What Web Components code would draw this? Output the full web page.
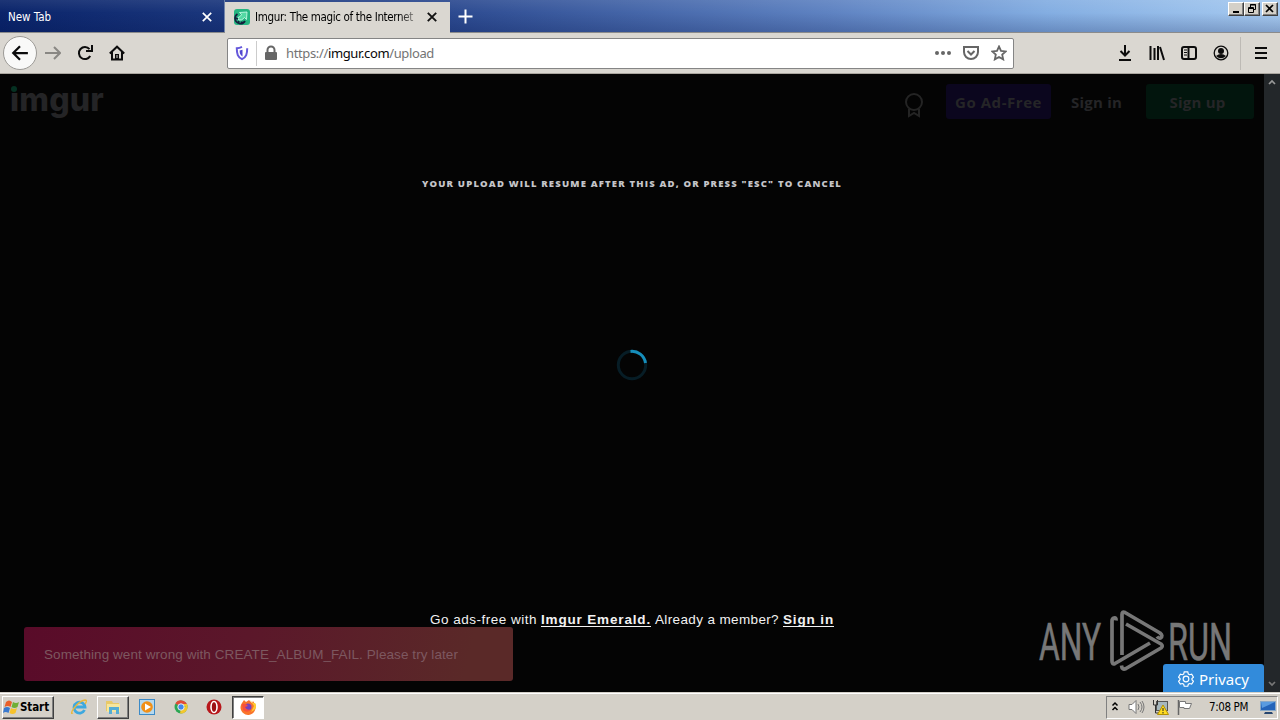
<!DOCTYPE html>
<html lang="en"><head><meta charset="utf-8"><title>Imgur: The magic of the Internet</title>
<style>html,body{margin:0;height:100%;overflow:hidden;background:#000}</style></head>
<body><desktop-screen></desktop-screen>
<script>
const define=(name,html,init)=>customElements.define(name,class extends HTMLElement{
 connectedCallback(){ if(this.shadowRoot)return;
  const t=document.createElement('template');t.innerHTML=html;
  this.attachShadow({mode:'open'}).append(t.content.cloneNode(true)); if(init)init(this,this.shadowRoot);
 }});

/* one line of text spread over a given width */
define('fit-text',`<style>:host{display:inline-block;white-space:pre;flex:none}span{display:inline-block}</style><span><slot></slot></span>`,(el,r)=>{
 const s=r.querySelector('span'),w=+el.getAttribute('w');el.style.width=w+'px';
 const n=el.textContent.length;s.style.letterSpacing=((w-s.getBoundingClientRect().width)/n)+'px';});

define('tab-strip',`<style>
:host{display:flex;box-sizing:border-box;height:33px;border-bottom:1px solid #8b8b8b;font:11.5px "DejaVu Sans Condensed","DejaVu Sans",sans-serif;
background:linear-gradient(180deg,rgba(255,255,255,.08),rgba(0,0,0,0) 40%,rgba(0,15,70,.22)),linear-gradient(90deg,#0a246a,#2c4a90 35%,#5f83c2 65%,#84aee2 82%,#a6caf0)}
.tab{display:flex;align-items:center;box-sizing:border-box;height:32px;color:#fff}
.a{width:225px;padding:1px 12px 0 8px;justify-content:space-between;border-right:1px solid #7184aa}
.b{width:225px;height:32px;margin:2px 0 -1px;padding:0 13px 2px 9px;background:#dad7d1;color:#000}
.b svg:first-child{margin-right:5px}.b .t{flex:1;-webkit-mask:linear-gradient(90deg,#000 145px,#0005 159px)}
.plus{margin:9px 0 0 8px}.wins{margin:2px 2px 0 auto;display:flex;height:14px}
.w{box-sizing:border-box;width:16px;height:14px;background:#d4d0c8;border:1px solid;border-color:#fff #404040 #404040 #fff;box-shadow:inset -1px -1px #808080}.w:last-child{margin-left:2px}.w svg{display:block}
</style><div class="tab a"><fit-text w="43">New Tab</fit-text><svg width="10" height="10"><path d="M.8.8 9.2 9.2M9.2.8.8 9.2" stroke="#fff" stroke-width="1.7"/></svg></div>
<div class="tab b"><svg width="16" height="16"><rect width="16" height="16" rx="3" fill="#25b581"/><path d="M5.500 3.500 13 3 12.500 10.500 10.500 8.500Q8 12 4.500 11L4 8.500Q6.500 8 7.500 5.500Z" fill="#54d9a4" stroke="#d2ffed" stroke-width=".8"/><path d="M3.500 5Q1 6.500 1 9.500q.5 4 4.500 5 4 .5 5.500-2.500M1.500 9l2.500 1M4 14l1-2M8 14.500 7.500 12.500" fill="none" stroke="#14203e" stroke-width="1.800"/></svg><span class="t"><fit-text w="158">Imgur: The magic of the Internet</fit-text></span><svg width="10" height="10"><path d="M.8.8 9.2 9.2M9.2.8.8 9.2" stroke="#111" stroke-width="1.9"/></svg></div>
<svg class="plus" width="15" height="15"><path d="M7.5 0.5v14M.5 7.5h14" stroke="#fff" stroke-width="2"/></svg>
<div class="wins"><div class="w"><svg width="14" height="12"><path d="M4 9h6" stroke="#000" stroke-width="2"/></svg></div><div class="w"><svg width="14" height="12" fill="none" stroke="#000"><path d="M5.5 4V1.5h5v5H9M5 2h6"/><path d="M3.5 4.5h5v5h-5zM3 5.5h6"/></svg></div><div class="w"><svg width="14" height="12"><path d="m3 2 7 7M10 2 3 9" stroke="#000" stroke-width="1.7"/></svg></div></div>`);

define('nav-bar',`<style>
:host{display:flex;align-items:center;box-sizing:border-box;height:41px;background:#dad7d1;border-bottom:1px solid #aaa69f;padding:0 11px 0 3px}
svg{display:block;flex:none;fill:none;stroke:#0c0c0c;stroke-width:2}
.back{box-sizing:border-box;width:34px;height:34px;border:1px solid #9c9a96;border-radius:50%;background:#f9f9f8;display:grid;place-items:center;margin-right:8px}
.url{box-sizing:border-box;display:flex;align-items:center;width:787px;height:31px;border:1px solid #858585;border-radius:2px;background:#fff;margin-left:102px;padding:0 6px;font:13px "Noto Sans",sans-serif;color:#747474}
.url b{font-weight:400;color:#080808}.sep{width:1px;height:25px;background:#ccc;margin:0 6px 0 6px}.g{stroke:#666}
.right{display:flex;align-items:center;margin-left:auto;gap:16px}.bar{width:1px;height:33px;background:#bdbab5;margin:0 -4px 0 -5px}
</style><div class="back"><svg width="18" height="18" viewBox="0 0 16 16"><path d="M15 8H2M8 2 2 8l6 6"/></svg></div>
<svg width="16" height="16" style="stroke:#898783"><path d="M0 8h14M9 2l6 6-6 6"/></svg>
<svg width="16" height="16" style="margin-left:16px"><path d="M13.2 11A6 6 0 1 1 12.5 4.2M15 0v6H9"/></svg>
<svg width="16" height="16" style="margin-left:16px"><path d="M0.8 8.5 8 1.7l7.2 6.8M3 7v7.5h10V7"/><path d="M6 14V9h4v5z" fill="#0c0c0c" stroke="none"/><path d="M8 10v3" stroke="#dad7d1" stroke-width="1"/></svg>
<div class="url"><svg width="16" height="16"><path d="M8 1.800Q5.500 3 2.800 3.200C2.800 9 3.700 12 8 14.200 12.300 12 13.200 9 13.200 3.200 10.500 3 8 1.800Z" stroke="#6558db"/><path d="M8.500 4.800v6.700Q5.600 10 5.600 5.500Z" fill="#5348d0" stroke="none"/></svg><span class="sep"></span>
<svg width="16" height="16" class="g"><path d="M4.500 8V5a3.500 3.500 0 0 1 7 0v3"/><rect x="2" y="7" width="12" height="8" rx="1" fill="#666" stroke="none"/></svg>
<fit-text w="148" style="margin-left:7px">https://<b>imgur.com</b>/upload</fit-text>
<svg width="16" height="16" style="margin-left:auto"><g fill="#666" stroke="none"><circle cx="2" cy="8" r="2"/><circle cx="8" cy="8" r="2"/><circle cx="14" cy="8" r="2"/></g></svg>
<svg class="g" width="16" height="16" style="margin:0 12px"><path d="M1 2h14v5A7 7 0 0 1 1 7Z"/><path d="m4.500 6 3.500 3.500L11.500 6"/></svg>
<svg class="g" width="16" height="16"><path d="m8 1.500 2 4.300 4.700.6-3.500 3.200 1 4.800L8 12l-4.200 2.400 1-4.800L1.300 6.400 6 5.800Z" stroke-width="1.8"/></svg></div>
<div class="right"><svg width="16" height="16"><path d="M8 0v10M3.500 6 8 10.500 12.500 6M2 15h12"/></svg>
<svg width="16" height="16"><path d="M1.500 1v14M5.500 3v12M9 1v14M11 2l4 13"/></svg>
<svg width="16" height="16"><rect x="1" y="2" width="14" height="12" rx="2"/><path d="M7.500 2v12"/><path d="M3 5h3M3 7.500h3M3 10h3" stroke-width="1"/></svg>
<svg width="16" height="16"><circle cx="8" cy="8" r="6.800" stroke-width="1.300"/><circle cx="8" cy="6" r="3" fill="#0c0c0c" stroke="none"/><path d="M3 11Q8 7 13 11 8 15.500 3 11Z" fill="#0c0c0c" stroke="none"/></svg>
<span class="bar"></span><svg width="16" height="16"><path d="M2 3h12M2 8h12M2 13h12"/></svg></div>`);

define('imgur-header',`<style>
:host{display:flex;align-items:flex-start;box-sizing:border-box;height:60px;padding:10px 10px 0;font:700 15px "Open Sans",sans-serif;color:#252527}
.logo{position:relative;width:94px;height:40px;font:800 32px/32px Inter,sans-serif;color:#242426}.logo i{position:absolute;left:0;top:1px;width:9px;height:8px;background:#04150f}
.logo i::after{content:"";position:absolute;left:1px;top:1px;width:6px;height:6px;border-radius:3px;background:#053122}.logo i{background:#040404}
svg{margin:8px 22px 0 auto;fill:none;stroke:#242424;stroke-width:2}
.btn{box-sizing:border-box;display:flex;justify-content:center;height:35px;line-height:36px;border-radius:3px}
</style><div class="logo"><fit-text w="94">imgur</fit-text><i></i></div>
<svg width="20" height="26"><circle cx="10" cy="10" r="8"/><path d="M5 17v7l5-3 5 3v-7"/></svg>
<div class="btn" style="width:105px;background:#0b061e"><fit-text w="87">Go Ad-Free</fit-text></div>
<div class="btn" style="width:95px;padding-right:4px"><fit-text w="51">Sign in</fit-text></div>
<div class="btn" style="width:108px;background:#02150d;padding-right:5px"><fit-text w="56">Sign up</fit-text></div>`);

define('any-run',`<style>:host{position:absolute;left:1035px;top:532px}svg{display:block;overflow:visible}</style>
<svg width="210" height="70" viewBox="1035 606 210 70"><g fill="#777" stroke="#777" stroke-width=".6" font-family="Roboto,sans-serif" font-size="51.5"><text x="1039" y="660" textLength="62" lengthAdjust="spacingAndGlyphs">ANY</text><text x="1168" y="660" textLength="64" lengthAdjust="spacingAndGlyphs">RUN</text></g>
<g fill="none" stroke="#777" stroke-width="3.700" stroke-linejoin="round"><path d="M1116 620.500Q1116.500 617.500 1114 618 1112 618.500 1112 621V661Q1112 665 1115 663.500L1150 643"/><path d="M1122 655V614.500Q1122 611 1125 612.500L1160 633Q1163.500 636 1160.500 638 1158.500 638.500 1157 636.500"/><path d="M1126 624 1161 644Q1163.500 646 1161 648L1126 668.500Q1122 670.500 1121.500 665.500"/></g></svg>`);

define('imgur-page',`<style>
:host{position:relative;display:flex;height:618px;background:#040404}
main{width:1264px;display:flex;flex-direction:column;align-items:center}imgur-header{align-self:stretch}
.msg{margin-top:42px;height:16px;font:900 9.500px/16px "Open Sans",sans-serif;color:#c5c5c9}
.spin{margin-top:157px;height:32px}.spin svg{display:block}
.ads{margin-top:229px;font:13.500px/20px "Liberation Sans",sans-serif;color:#f2f2f2;display:flex;gap:4px}
.ads b{border-bottom:1px solid #f2f2f2;height:16px}
aside{width:16px;background:#23272a;display:flex;flex-direction:column;justify-content:space-between;align-items:center;padding:5px 0;box-sizing:border-box}
.toast{position:absolute;left:24px;top:553px;width:489px;height:54px;box-sizing:border-box;padding:0 20px;border-radius:3px;background:linear-gradient(105deg,#590b29,#5b172a 45%,#5a2928 90%);font:13.500px/56px "Liberation Sans",sans-serif;color:#7d5860}
.privacy{position:absolute;left:1163px;top:590px;width:101px;height:28px;box-sizing:border-box;padding:1px 15px 0;display:flex;align-items:center;gap:5px;border-radius:3px 3px 0 0;background:#328bdb;color:#fff;font:15px "Noto Sans",sans-serif}
</style><main><imgur-header></imgur-header>
<div class="msg"><fit-text w="420">YOUR UPLOAD WILL RESUME AFTER THIS AD, OR PRESS "ESC" TO CANCEL</fit-text></div>
<div class="spin"><svg width="32" height="32" fill="none" stroke-width="3"><circle cx="16" cy="16" r="13.700" stroke="#071d26"/><path d="M14.500 2.400A13.700 13.700 0 0 1 29.500 14" stroke="#168ebb"/></svg></div>
<div class="ads"><fit-text w="107">Go ads-free with</fit-text><b><fit-text w="110">Imgur Emerald.</fit-text></b><fit-text w="124">Already a member?</fit-text><b><fit-text w="51">Sign in</fit-text></b></div></main>
<aside><svg width="8" height="6"><path d="m1 5 3-3 3 3" fill="none" stroke="#999" stroke-width="1.700"/></svg><svg width="8" height="6"><path d="m1 1 3 3 3-3" fill="none" stroke="#777" stroke-width="1.700"/></svg></aside>
<div class="toast"><fit-text w="414">Something went wrong with CREATE_ALBUM_FAIL. Please try later</fit-text></div><any-run></any-run>
<div class="privacy"><svg width="17" height="18" viewBox="0 0 18 18" fill="none" stroke="#fff" stroke-width="1.300"><path d="M7 1h4l.6 2.400 1.500.8 2.300-.7 2 3.400L15.700 8.500v1.300l1.700 1.700-2 3.300-2.300-.7-1.500.8L11 17.200H7l-.6-2.300-1.500-.8-2.300.7-2-3.300 1.700-1.700V8.500L.6 6.900l2-3.400 2.300.7 1.500-.8Z"/><circle cx="9" cy="9" r="3.200"/></svg><fit-text w="50">Privacy</fit-text></div>`);

define('task-bar',`<style>
:host{display:flex;align-items:center;box-sizing:border-box;height:28px;border-top:1px solid #d4d0c8;box-shadow:inset 0 1px #fff;background:#d4d0c8;padding:1px 2px 0;font:11.500px "DejaVu Sans Condensed","DejaVu Sans",sans-serif;color:#000}
svg{display:block;flex:none}.box{box-sizing:border-box;height:23px;display:flex;align-items:center;border:1px solid;border-color:#fff #404040 #404040 #fff;box-shadow:inset -1px -1px #808080}
.start{width:52px;font-weight:700;padding-left:0;gap:0;margin-right:17px}
.i{width:32px;justify-content:center}.on{background:#fff;border-color:#404040 #fff #fff #404040;box-shadow:inset 1px 1px #808080}
.tray{box-sizing:border-box;display:flex;align-items:center;width:172px;height:23px;margin-left:auto;border:1px solid;border-color:#808080 #fff #fff #808080;padding:0 1px 0 4px}
</style><div class="box start"><svg width="17" height="17"><path d="M3 3Q6 0 9 3L7.500 8Q5 6 1.500 8Z" fill="#e9602b"/><path d="M10 3q3 2 6 0l-1.500 5q-3 2-6 0Z" fill="#70af35"/><path d="M1 9q3-2 6 0l-1.500 5q-3-2-5.500 0Z" fill="#3979cf"/><path d="M8 9q3 2 6 0l-1.500 5q-3 2-6 0Z" fill="#f7c22b"/></svg><fit-text w="29">Start</fit-text></div>
<svg width="16" height="16" fill="none"><path d="M13.500 11a5.500 5.500 0 1 1 .5-3H4" stroke="#3da8df" stroke-width="2.800"/><path d="M2 14C-3 17 6 2 14 1q3 0 0 4" stroke="#eab83c" stroke-width="1.300"/></svg>
<div class="box i" style="margin:0 10px 0 10px"><svg width="16" height="16"><path d="M1 2h6l1 2h6v8H1Z" fill="#e8c968"/><path d="M2 5h13v8H2Z" fill="#f6e69d"/><path d="M4 15V8h10v7h-3v-4H7v4Z" fill="#55add5"/></svg></div>
<svg width="16" height="16"><rect x=".5" y=".5" width="15" height="15" fill="#b5d8ee" stroke="#3b8ac7"/><circle cx="8" cy="8" r="5.800" fill="#f19018"/><path d="M6 4.500 12 8l-6 3.500Z" fill="#fff"/></svg>
<svg width="16" height="16" style="margin-left:18px"><circle cx="8" cy="8" r="6.500" fill="#2ca653"/><path d="M8 8 2.400 4.500A6.500 6.500 0 0 1 14.200 6Z" fill="#e24a38"/><path d="M8 8h6.500A6.500 6.500 0 0 1 7 14.500Z" fill="#f4c72c"/><path d="M8 5h6a6.500 6.500 0 0 1 .3 4Z" fill="#f4c72c"/><circle cx="8" cy="8" r="3.200" fill="#4187ed" stroke="#eee"/></svg>
<svg width="16" height="16" style="margin:0 10px 0 17px"><circle cx="8" cy="8" r="7.500" fill="#b8171b"/><ellipse cx="8" cy="8" rx="3" ry="5.500" fill="#9c1014" stroke="#fff" stroke-width="1.600"/></svg>
<div class="box i on"><svg width="16" height="16"><path d="M2 4 4 1l2 2 3-2 3 3 1-2q3 4 2.500 7A7.500 7.500 0 1 1 2 4Z" fill="#fa742b"/><path d="m10 1 4 6-3 6q8-4 4-9l-2 0Z" fill="#ffcb32"/><circle cx="8" cy="8" r="3.500" fill="#7542bd"/><path d="M2 5q4-1 6 2l-3 1q2 4 6 2-3 5-8 1Z" fill="#f9503c"/></svg></div>
<div class="tray"><svg width="8" height="12" fill="none" stroke="#000" stroke-width="1.500"><path d="m1.500 4.500 2.500-2.500 2.500 2.500M1.500 9l2.500-2.500L6.500 9"/></svg>
<svg width="17" height="16" style="margin-left:9px" fill="none" stroke="#777"><path d="M1 5.500h3l4-4v13l-4-4H1Z" fill="#fff"/><path d="M10 5q2 3 0 6M12 3q4 5 0 10M14 2q4 6 0 12"/></svg>
<svg width="17" height="16" style="margin-left:7px"><rect x="4.500" y="2.500" width="11" height="9" fill="#a7b7bd" stroke="#555"/><path d="M1.500 1v5h4V1M3.500 6v8H8" fill="none" stroke="#333"/><path d="m11 6 5.500 9.500h-11Z" fill="#fedb20" stroke="#b39000"/><path d="M11 9v3m0 1v1.500" stroke="#222"/></svg>
<svg width="17" height="16" style="margin-left:7px"><path d="M2.500 1v15" stroke="#666" stroke-width="1.500"/><path d="M3.500 2.500h6v2h6l-2 5H8v-1H3.500Z" fill="#fff" stroke="#777"/></svg>
<fit-text w="39" style="margin-left:16px">7:08 PM</fit-text>
<svg width="16" height="15" style="margin-left:auto"><rect x=".5" y="1.500" width="15" height="9" fill="#2464b9" stroke="#88a8c7"/><path d="M1 2h14L2 8Z" fill="#599be0"/><path d="M5 12h7l1 2H4Z" fill="#27466f"/></svg></div>`);

define('desktop-screen',`<style>:host{display:grid;grid-template-rows:33px 41px 618px 28px;width:1280px;height:720px;overflow:hidden}</style><tab-strip></tab-strip><nav-bar></nav-bar><imgur-page></imgur-page><task-bar></task-bar>`);
</script></body></html>
